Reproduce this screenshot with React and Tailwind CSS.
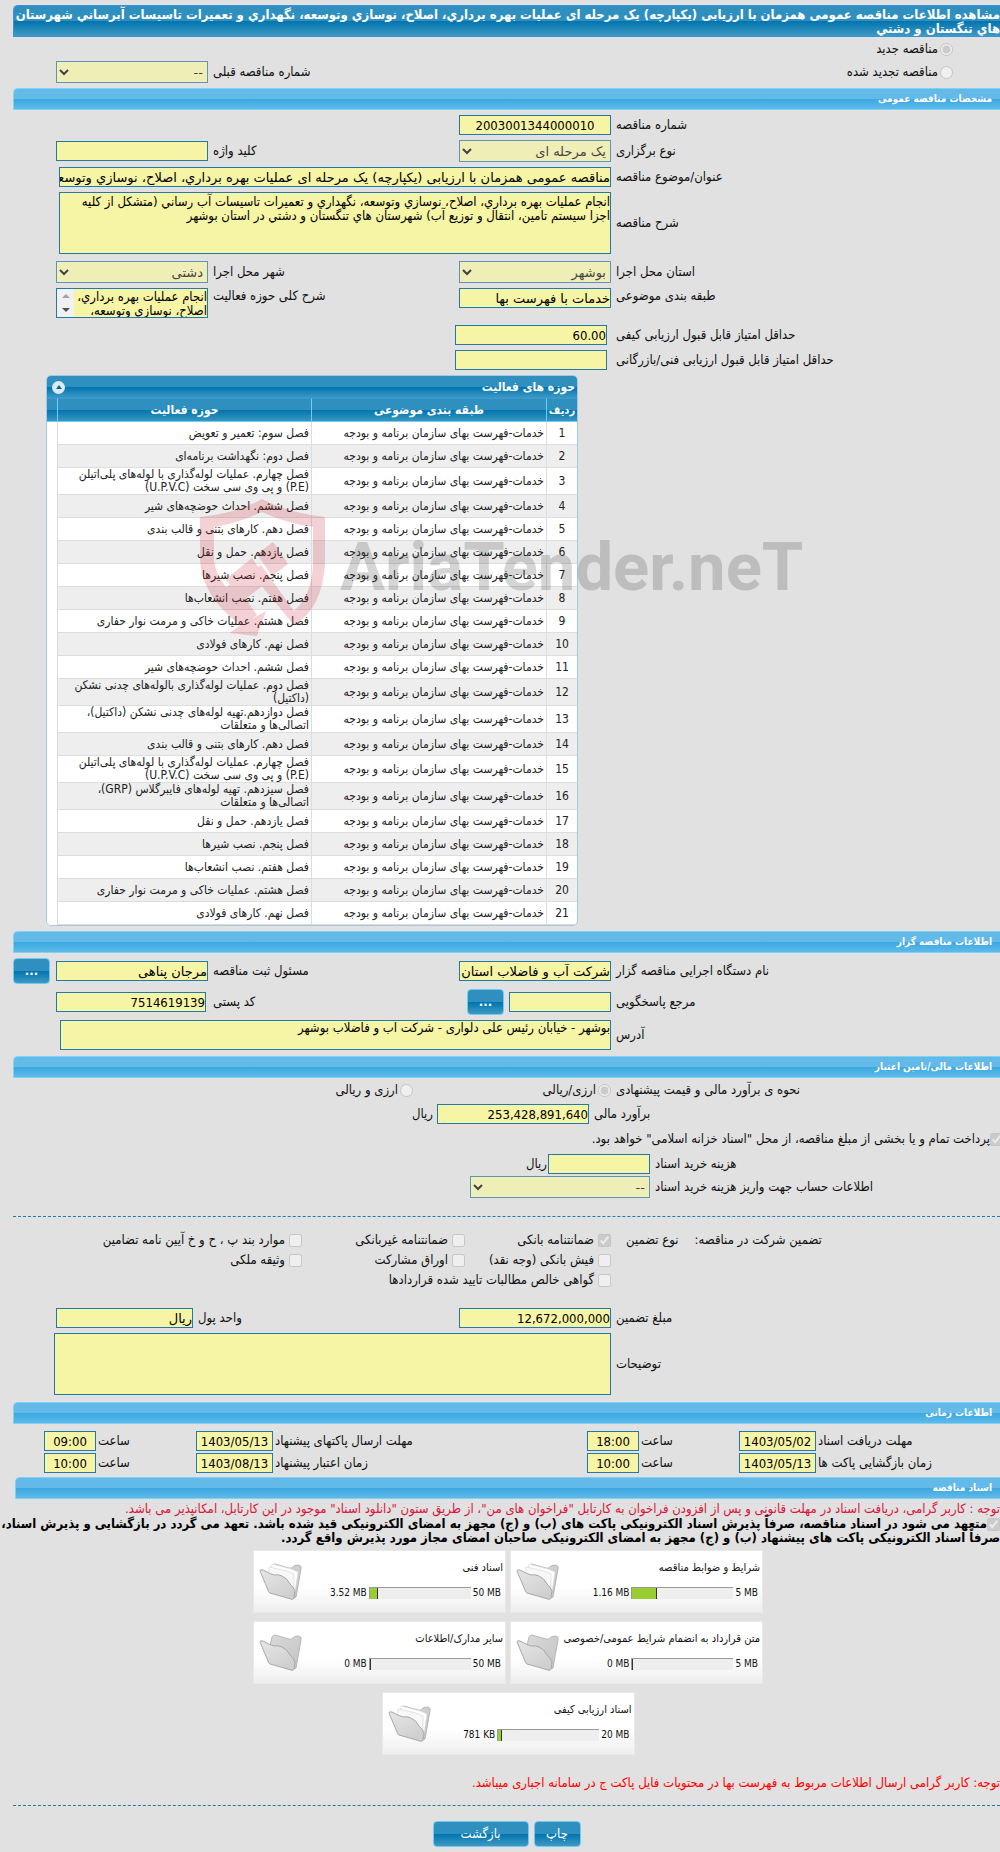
import { useId } from 'react'

const FORM_GRID = 'grid grid-cols-[389fr_152px_251fr_152px_43px] items-center'
const FIELD = 'block w-full border border-[#2479ab] bg-[#f6f4a5] text-black outline-none'
const DARK_BAR = 'bg-[linear-gradient(#2f90bf_50%,#0074ae_50%,#3f99c4)]'

const ACTIVITIES = [
  'فصل سوم: تعمیر و تعویض',
  'فصل دوم: نگهداشت برنامه‌ای',
  'فصل چهارم. عملیات لوله‌گذاری با لوله‌های پلی‌اتیلن (P.E) و پی وی سی سخت (U.P.V.C)',
  'فصل ششم. احداث حوضچه‌های شیر',
  'فصل دهم. کارهای بتنی و قالب بندی',
  'فصل یازدهم. حمل و نقل',
  'فصل پنجم. نصب شیرها',
  'فصل هفتم. نصب انشعاب‌ها',
  'فصل هشتم. عملیات خاکی و مرمت نوار حفاری',
  'فصل نهم. کارهای فولادی',
  'فصل ششم. احداث حوضچه‌های شیر',
  'فصل دوم. عملیات لوله‌گذاری بالوله‌های چدنی نشکن (داکتیل)',
  'فصل دوازدهم.تهیه لوله‌های چدنی نشکن (داکتیل)، اتصالی‌ها و متعلقات',
  'فصل دهم. کارهای بتنی و قالب بندی',
  'فصل چهارم. عملیات لوله‌گذاری با لوله‌های پلی‌اتیلن (P.E) و پی وی سی سخت (U.P.V.C)',
  'فصل سیزدهم. تهیه لوله‌های فایبرگلاس (GRP)، اتصالی‌ها و متعلقات',
  'فصل یازدهم. حمل و نقل',
  'فصل پنجم. نصب شیرها',
  'فصل هفتم. نصب انشعاب‌ها',
  'فصل هشتم. عملیات خاکی و مرمت نوار حفاری',
  'فصل نهم. کارهای فولادی',
]

const DOCUMENTS = [
  { title: 'شرایط و ضوابط مناقصه', used: '1.16 MB', max: '5 MB', percent: 24, filled: true },
  { title: 'اسناد فنی', used: '3.52 MB', max: '50 MB', percent: 8, filled: true },
  { title: 'متن قرارداد به انضمام شرایط عمومی/خصوصی', used: '0 MB', max: '5 MB', percent: 0, filled: false },
  { title: 'سایر مدارک/اطلاعات', used: '0 MB', max: '50 MB', percent: 0, filled: false },
  { title: 'اسناد ارزیابی کیفی', used: '781 KB', max: '20 MB', percent: 4, filled: true },
]

function SectionBar({ children }) {
  return (
    <h2 className="flex h-[22px] items-center rounded-tl-[5px] border border-r-0 border-[#7bd3f6] bg-[linear-gradient(#63bae9_50%,#3aa8e1_50%,#5fb9e9)] pr-2 text-[10px] font-bold text-white">
      {children}
    </h2>
  )
}

function Label({ id, children, className = '' }) {
  return (
    <label htmlFor={id} className={`whitespace-nowrap pe-[5px] text-end ${className}`}>
      {children}
    </label>
  )
}

function TextField({ id, value = '', className = '' }) {
  return <input id={id} type="text" readOnly value={value} className={`${FIELD} h-5 ${className}`} />
}

function WideField({ className = '', ...rest }) {
  return <TextField {...rest} className={`font-['DejaVu_Sans',sans-serif] ${className}`} />
}

function SelectField({ id, value }) {
  return (
    <select
      id={id}
      disabled
      className="block h-[22px] w-full border border-[#2479ab] bg-[#f6f4a5] font-['DejaVu_Sans',sans-serif] text-[13px] text-black opacity-70"
    >
      <option>{value}</option>
    </select>
  )
}

function Choice({ type, label, checked = false, name, className = '' }) {
  const id = useId()
  return (
    <span className={`flex items-center whitespace-nowrap ${className}`}>
      <input id={id} type={type} name={name} disabled defaultChecked={checked} className="size-[13px] shrink-0" />
      <label htmlFor={id}>{label}</label>
    </span>
  )
}

function BlueButton({ children, className = '', ...rest }) {
  return (
    <button
      type="button"
      className={`h-[26px] rounded-[4px] border border-[#6fcbf2] text-[13px] text-white ${DARK_BAR} ${className}`}
      {...rest}
    >
      {children}
    </button>
  )
}

function Folder({ filled }) {
  return (
    <svg viewBox="-1 -1 44 38" className="h-[38px] w-11" aria-hidden="true">
      <defs>
        <linearGradient id="folderBack" x1="0" y1="0" x2="1" y2="1">
          <stop offset="0" stopColor="#d9d9d9" />
          <stop offset="1" stopColor="#c4c4c4" />
        </linearGradient>
        <linearGradient id="folderFront" x1="0" y1="0" x2="0.6" y2="1">
          <stop offset="0" stopColor="#e6e6e6" />
          <stop offset="1" stopColor="#cfcfcf" />
        </linearGradient>
      </defs>
      <path d="M10 10 L12 2 Q13 0 15 0 L29 4 Q32 5 34 2 Q36 1 39 1 Q42 2 41 5 L36 33 L32 35 L10 26 Z" fill="url(#folderBack)" stroke="#ababab" strokeWidth="0.8" />
      {filled && (
        <>
          <path d="M12 0 L31 5 L38 8 L35 28 L10 20 Z" fill="#fff" stroke="#dcdcdc" strokeWidth="0.7" />
          <path d="M9 3 L27 7 L34 10 L34 28 L8 20 Z" fill="#f8f8f8" stroke="#d8d8d8" strokeWidth="0.7" />
        </>
      )}
      <path d="M0 7 Q0 5 3 6 Q10 10 14 11 Q18 10 22 12 Q27 14 30 20 Q33 22 35 27 L34 34 Q33 36 31 35 L10 29 Q8 28 8 26 Z" fill="url(#folderFront)" stroke="#a8a8a8" strokeWidth="1" />
    </svg>
  )
}

function DocumentCard({ title, used, max, percent, filled }) {
  return (
    <article className="flex h-[63px] w-[253px] border border-[#e9e9e9] bg-[linear-gradient(#fff_60%,#eee)]">
      <div className="flex min-w-0 flex-1 flex-col justify-between pt-[10px] pr-[2px] pb-3 text-[10px]">
        <h3 className="text-[11px] whitespace-nowrap">{title}</h3>
        <div className="flex items-center gap-[2px] pr-[2px]">
          <span dir="ltr" className="whitespace-nowrap">{max}</span>
          <div dir="ltr" className="h-3 w-[102px] border-t border-l border-[#9a9a9a] bg-[#eee]">
            <div className="h-full border-r border-[#333] bg-[#9acd32]" style={{ width: `${percent}%` }} />
          </div>
          <span dir="ltr" className="whitespace-nowrap">{used}</span>
        </div>
      </div>
      <div className="flex w-[49px] items-center">
        <Folder filled={filled} />
      </div>
    </article>
  )
}

function Watermark() {
  return (
    <div dir="ltr" className="pointer-events-none absolute top-[124px] left-[187px] flex opacity-20" aria-hidden="true">
      <svg viewBox="0 0 126 138" className="h-[138px] w-[126px] shrink-0" fill="#c8202e">
        <path fillRule="evenodd" d="M0 18 Q38 14 62 0 Q88 14 125 18 V65 Q122 110 94 126 L56 80 L42 92 Q49 106 57 116 L52 120 L66 112 L57 137 L30 134 L40 126 Q1 96 0 60 Z M14 28 V62 Q16 76 26 88 L61 66 L94 112 Q112 96 113 65 V28 Q85 24 62 13 Q38 24 14 28 Z" />
        <path d="M57 55 L73 43 L88 65 L72 77 Z M26 80 L52 59 L68 83 L41 103 Z" />
      </svg>
      <span className="ml-[14px] font-[Roboto,'Liberation_Sans',sans-serif] text-[67px] leading-[136px] font-bold text-[#333]">
        AriaTender.neT
      </span>
    </div>
  )
}

function ActivityTable() {
  return (
    <div className="relative mt-[5px]">
      <section className="mr-auto ml-[33px] w-full max-w-[532px] overflow-hidden rounded-[5px] border border-[#9fc9e5] bg-white text-xs leading-[13px] text-[#222]">
        <header className={`flex h-[22px] items-center justify-between pr-[2px] pl-[5px] font-bold text-white ${DARK_BAR}`}>
          <h3>حوزه های فعالیت</h3>
          <button type="button" aria-label="بستن" className="flex size-[13px] items-center justify-center rounded-full bg-[#dbeaf8]">
            <svg viewBox="0 0 6 4" className="h-1 w-1.5" fill="#1c5f8c">
              <path d="M3 0 L6 4 H0 Z" />
            </svg>
          </button>
        </header>
        <table className="w-full table-fixed border-separate border-spacing-0">
          <thead>
            <tr className={`h-6 text-white ${DARK_BAR}`}>
              <th className="w-[30px] border-y border-t-[#3a9ad9] border-b-[#6fcdf2] text-[11px]">ردیف</th>
              <th className="w-[235px] border-y border-r border-t-[#3a9ad9] border-r-[#6fcdf2] border-b-[#6fcdf2]">طبقه بندی موضوعی</th>
              <th className="border-y border-r border-t-[#3a9ad9] border-r-[#6fcdf2] border-b-[#6fcdf2]">حوزه فعالیت</th>
              <th className="w-[11px] border-y border-r border-t-[#3a9ad9] border-r-[#6fcdf2] border-b-[#6fcdf2]" />
            </tr>
          </thead>
          <tbody>
            {ACTIVITIES.map((activity, i) => (
              <tr key={i} className="h-[23px] even:bg-[#eee]">
                <td className="border-b border-[#ddd] text-center">{i + 1}</td>
                <td className="border-r border-b border-[#ddd] pr-[2px] whitespace-nowrap">خدمات-فهرست بهای سازمان برنامه و بودجه</td>
                <td className="border-r border-b border-[#ddd] pr-[2px]">{activity}</td>
                <td className="border-r border-[#ddd] bg-white" />
              </tr>
            ))}
          </tbody>
        </table>
      </section>
      <Watermark />
    </div>
  )
}

function TimeRow({ items }) {
  return (
    <div className="grid grid-cols-[184fr_77px_100fr_52px_314fr_77px_100fr_52px_31px] items-center">
      {items.map(({ id, label, date, time }) => (
        <div key={id} className="contents">
          <label htmlFor={id} className="pe-[2px] text-end whitespace-nowrap">{label}</label>
          <TextField id={id} value={date} className="text-center" />
          <label htmlFor={`${id}-time`} className="pe-[2px] text-end">ساعت</label>
          <TextField id={`${id}-time`} value={time} className="text-center" />
        </div>
      ))}
    </div>
  )
}

export default function App() {
  return (
    <main
      dir="rtl"
      lang="fa"
      className="overflow-x-hidden bg-[#e1e1e1] pt-[5px] pb-[5px] pl-[13px] font-['DejaVu_Sans_Condensed','DejaVu_Sans',sans-serif] text-[13px] leading-[14px] text-[#111]"
    >
      <h1 className={`h-8 rounded-tl-[5px] border border-r-0 border-[#3a93d8] pt-[2px] font-bold whitespace-nowrap text-white ${DARK_BAR}`}>
        مشاهده اطلاعات مناقصه عمومی همزمان با ارزیابی (یکپارچه) یک مرحله ای عملیات بهره برداري، اصلاح، نوسازي وتوسعه، نگهداري و تعميرات تاسيسات آبرساني شهرستان
        <br />
        هاي تنگستان و دشتي
      </h1>

      <div className="pt-px pb-[5px]">
        <Choice type="radio" name="kind" label="مناقصه جدید" checked className="mb-px h-[22px] gap-[2px] pr-[47px]" />
        <div className={FORM_GRID}>
          <Choice type="radio" name="kind" label="مناقصه تجدید شده" className="gap-[2px] pr-[47px]" />
          <span />
          <Label id="previous">شماره مناقصه قبلی</Label>
          <SelectField id="previous" value="--" />
        </div>
      </div>

      <SectionBar>مشخصات مناقصه عمومی</SectionBar>
      <div className="flex flex-col gap-[5px] pt-[5px]">
        <div className={FORM_GRID}>
          <Label id="number">شماره مناقصه</Label>
          <TextField id="number" value="2003001344000010" className="text-center" />
        </div>
        <div className={FORM_GRID}>
          <Label id="type">نوع برگزاری</Label>
          <SelectField id="type" value="یک مرحله ای" />
          <Label id="keyword">کلید واژه</Label>
          <TextField id="keyword" />
        </div>
        <div className={FORM_GRID}>
          <Label id="subject">عنوان/موضوع مناقصه</Label>
          <div className="col-span-3 pl-[3px]">
            <WideField id="subject" value="مناقصه عمومی همزمان با ارزیابی (یکپارچه) یک مرحله ای عملیات بهره برداري، اصلاح، نوسازي وتوسعه، نگهداري و تعميرات تاسيسات آبرساني شهرستان هاي تنگستان و دشتي" />
          </div>
        </div>
        <div className={FORM_GRID}>
          <Label id="description">شرح مناقصه</Label>
          <div className="col-span-3 pl-[3px]">
            <textarea
              id="description"
              readOnly
              className={`${FIELD} h-[62px] resize-none pt-[2px]`}
              value="انجام عملیات بهره برداري، اصلاح، نوسازي وتوسعه، نگهداري و تعميرات تاسيسات آب رساني (متشکل از کلیه اجزا سیستم تامین، انتقال و توزیع آب) شهرستان هاي تنگستان و دشتي در استان بوشهر"
            />
          </div>
        </div>
        <div className={`${FORM_GRID} mt-[2px]`}>
          <Label id="province">استان محل اجرا</Label>
          <SelectField id="province" value="بوشهر" />
          <Label id="city">شهر محل اجرا</Label>
          <SelectField id="city" value="دشتی" />
        </div>
        <div className="grid grid-cols-[389fr_152px_251fr_152px_43px] items-start">
          <Label id="category" className="pt-px">طبقه بندی موضوعی</Label>
          <WideField id="category" value="خدمات با فهرست بها" />
          <Label id="scope" className="pt-px">شرح کلی حوزه فعالیت</Label>
          <div className="relative">
            <textarea
              id="scope"
              readOnly
              className={`${FIELD} h-[30px] resize-none overflow-hidden pt-px pl-[17px]`}
              value="انجام عملیات بهره برداري، اصلاح، نوسازي وتوسعه، نگهداري و تعميرات تاسيسات"
            />
            <div className="absolute top-px left-px flex h-7 w-[17px] flex-col items-center justify-around bg-[#f1f1f1]" aria-hidden="true">
              <svg viewBox="0 0 8 4" className="h-1 w-2" fill="#a3a3a3"><path d="M4 0 L8 4 H0 Z" /></svg>
              <svg viewBox="0 0 8 4" className="h-1 w-2" fill="#505050"><path d="M4 4 L8 0 H0 Z" /></svg>
            </div>
          </div>
        </div>
        <div className={`${FORM_GRID} mt-[2px]`}>
          <Label id="quality">حداقل امتیاز قابل قبول ارزیابی کیفی</Label>
          <div className="w-[156px] pr-1"><TextField id="quality" value="60.00" /></div>
        </div>
        <div className={FORM_GRID}>
          <Label id="technical">حداقل امتیاز قابل قبول ارزیابی فنی/بازرگانی</Label>
          <div className="w-[156px] pr-1"><TextField id="technical" /></div>
        </div>
      </div>

      <ActivityTable />

      <div className="mt-[5px]">
        <SectionBar>اطلاعات مناقصه گزار</SectionBar>
      </div>
      <div className="flex flex-col gap-[5px] pt-[5px] pb-[6px]">
        <div className={FORM_GRID}>
          <Label id="agency">نام دستگاه اجرایی مناقصه گزار</Label>
          <WideField id="agency" value="شرکت آب و فاضلاب استان بوشهر" />
          <Label id="officer">مسئول ثبت مناقصه</Label>
          <WideField id="officer" value="مرجان پناهی" />
          <BlueButton className="mr-auto w-[37px] font-bold" aria-label="انتخاب مسئول">...</BlueButton>
        </div>
        <div className={FORM_GRID}>
          <Label id="contact">مرجع پاسخگویی</Label>
          <div className="flex items-center gap-[5px]">
            <TextField id="contact" className="max-w-[102px]" />
            <BlueButton className="w-[37px] shrink-0 font-bold" aria-label="انتخاب مرجع">...</BlueButton>
          </div>
          <Label id="postal">کد پستی</Label>
          <div className="pr-[2px]"><TextField id="postal" value="7514619139" /></div>
        </div>
        <div className={FORM_GRID}>
          <Label id="address">آدرس</Label>
          <div className="col-span-3 pl-1">
            <textarea id="address" readOnly className={`${FIELD} h-[30px] resize-none`} value="بوشهر - خیابان رئیس علی دلواری - شرکت آب و فاضلاب بوشهر" />
          </div>
        </div>
      </div>

      <SectionBar>اطلاعات مالی/تامین اعتبار</SectionBar>
      <div className={`${FORM_GRID} mb-[2px] h-6`}>
        <span className="pe-[5px] text-end whitespace-nowrap">نحوه ی برآورد مالی و قیمت پیشنهادی</span>
        <Choice type="radio" name="currency" label="ارزی/ریالی" checked className="gap-[2px]" />
        <Choice type="radio" name="currency" label="ارزی و ریالی" className="gap-[2px] pr-[46px]" />
      </div>
      <div className="grid grid-cols-[411fr_152px_424fr] items-center">
        <Label id="estimate">برآورد مالی</Label>
        <TextField id="estimate" value="253,428,891,640" />
        <span className="pr-1">ریال</span>
      </div>
      <Choice type="checkbox" label={'پرداخت تمام و یا بخشی از مبلغ مناقصه، از محل "اسناد خزانه اسلامی" خواهد بود.'} checked className="-mr-[3px] h-[30px]" />
      <div className="grid grid-cols-[350fr_180px_457fr] items-center gap-y-[2px]">
        <Label id="fee">هزینه خرید اسناد</Label>
        <div className="flex items-center gap-px">
          <TextField id="fee" className="max-w-[102px]" />
          <span>ریال</span>
        </div>
        <span />
        <Label id="account">اطلاعات حساب جهت واریز هزینه خرید اسناد</Label>
        <SelectField id="account" value="--" />
      </div>

      <hr className="mt-[18px] border-t border-dashed border-[#2479ab]" />

      <fieldset className="mt-[13px] grid grid-cols-[389fr_598fr]">
        <div className="flex h-5 items-center justify-end gap-4 pl-[15px] whitespace-nowrap">
          <span>تضمین شرکت در مناقصه:</span>
          <span>نوع تضمین</span>
        </div>
        <div className="grid grid-cols-[146fr_163fr_289fr]">
          <Choice type="checkbox" label="ضمانتنامه بانکی" checked className="h-5 gap-1" />
          <Choice type="checkbox" label="ضمانتنامه غیربانکی" className="h-5 gap-1" />
          <Choice type="checkbox" label="موارد بند پ ، ح و خ آیین نامه تضامین" className="h-5 gap-1" />
          <Choice type="checkbox" label="فیش بانکی (وجه نقد)" className="h-5 gap-1" />
          <Choice type="checkbox" label="اوراق مشارکت" className="h-5 gap-1" />
          <Choice type="checkbox" label="وثیقه ملکی" className="h-5 gap-1" />
          <Choice type="checkbox" label="گواهی خالص مطالبات تایید شده قراردادها" className="col-span-3 h-5 gap-1" />
        </div>
      </fieldset>

      <div className="mt-[18px] mb-[7px] flex flex-col gap-[5px]">
        <div className="grid grid-cols-[389fr_152px_266fr_137px_43px] items-center">
          <Label id="amount">مبلغ تضمین</Label>
          <TextField id="amount" value="12,672,000,000" />
          <Label id="unit">واحد پول</Label>
          <WideField id="unit" value="ریال" />
        </div>
        <div className="grid grid-cols-[389fr_557fr_41px] items-center">
          <Label id="notes">توضیحات</Label>
          <textarea id="notes" readOnly className={`${FIELD} h-[62px] resize-none`} value="" />
        </div>
      </div>

      <SectionBar>اطلاعات زمانی</SectionBar>
      <div className="flex flex-col gap-[2px] pt-[7px] pb-1">
        <TimeRow
          items={[
            { id: 'receive', label: 'مهلت دریافت اسناد', date: '1403/05/02', time: '18:00' },
            { id: 'send', label: 'مهلت ارسال پاکتهای پیشنهاد', date: '1403/05/13', time: '09:00' },
          ]}
        />
        <TimeRow
          items={[
            { id: 'opening', label: 'زمان بازگشایی پاکت ها', date: '1403/05/13', time: '10:00' },
            { id: 'validity', label: 'زمان اعتبار پیشنهاد', date: '1403/08/13', time: '10:00' },
          ]}
        />
      </div>

      <div className="pl-[2px]">
        <SectionBar>اسناد مناقصه</SectionBar>
      </div>
      <p className="mt-[3px] whitespace-nowrap text-[#d9143c]">
        توجه : کاربر گرامی، دریافت اسناد در مهلت قانونی و پس از افزودن فراخوان به کارتابل "فراخوان های من"، از طریق ستون "دانلود اسناد" موجود در این کارتابل، امکانپذیر می باشد.
      </p>
      <div className="mt-px font-bold whitespace-nowrap text-black">
        <input id="commit" type="checkbox" disabled defaultChecked className="size-[13px] align-bottom" />
        <label htmlFor="commit">
          متعهد می شود در اسناد مناقصه، صرفاً پذیرش اسناد الکترونیکی پاکت های (ب) و (ج) مجهز به امضای الکترونیکی قید شده باشد. تعهد می گردد در بازگشایی و پذیرش اسناد،
          <br />
          صرفاً اسناد الکترونیکی پاکت های پیشنهاد (ب) و (ج) مجهز به امضای الکترونیکی صاحبان امضای مجاز مورد پذیرش واقع گردد.
        </label>
      </div>

      <div className="pl-[3px]">
        <div className="mx-auto mt-[5px] flex max-w-[514px] flex-wrap justify-center gap-x-1 gap-y-2">
          {DOCUMENTS.map((doc) => (
            <DocumentCard key={doc.title} {...doc} />
          ))}
        </div>
      </div>

      <p className="mt-[21px] whitespace-nowrap text-[#f00]">
        توجه: کاربر گرامی ارسال اطلاعات مربوط به فهرست بها در محتویات فایل پاکت ج در سامانه اجباری میباشد.
      </p>
      <hr className="mt-[15px] border-t border-dashed border-[#2479ab]" />
      <div className="mt-[15px] flex justify-center gap-[5px]">
        <BlueButton className="w-[47px]">چاپ</BlueButton>
        <BlueButton className="w-24">بازگشت</BlueButton>
      </div>
    </main>
  )
}
